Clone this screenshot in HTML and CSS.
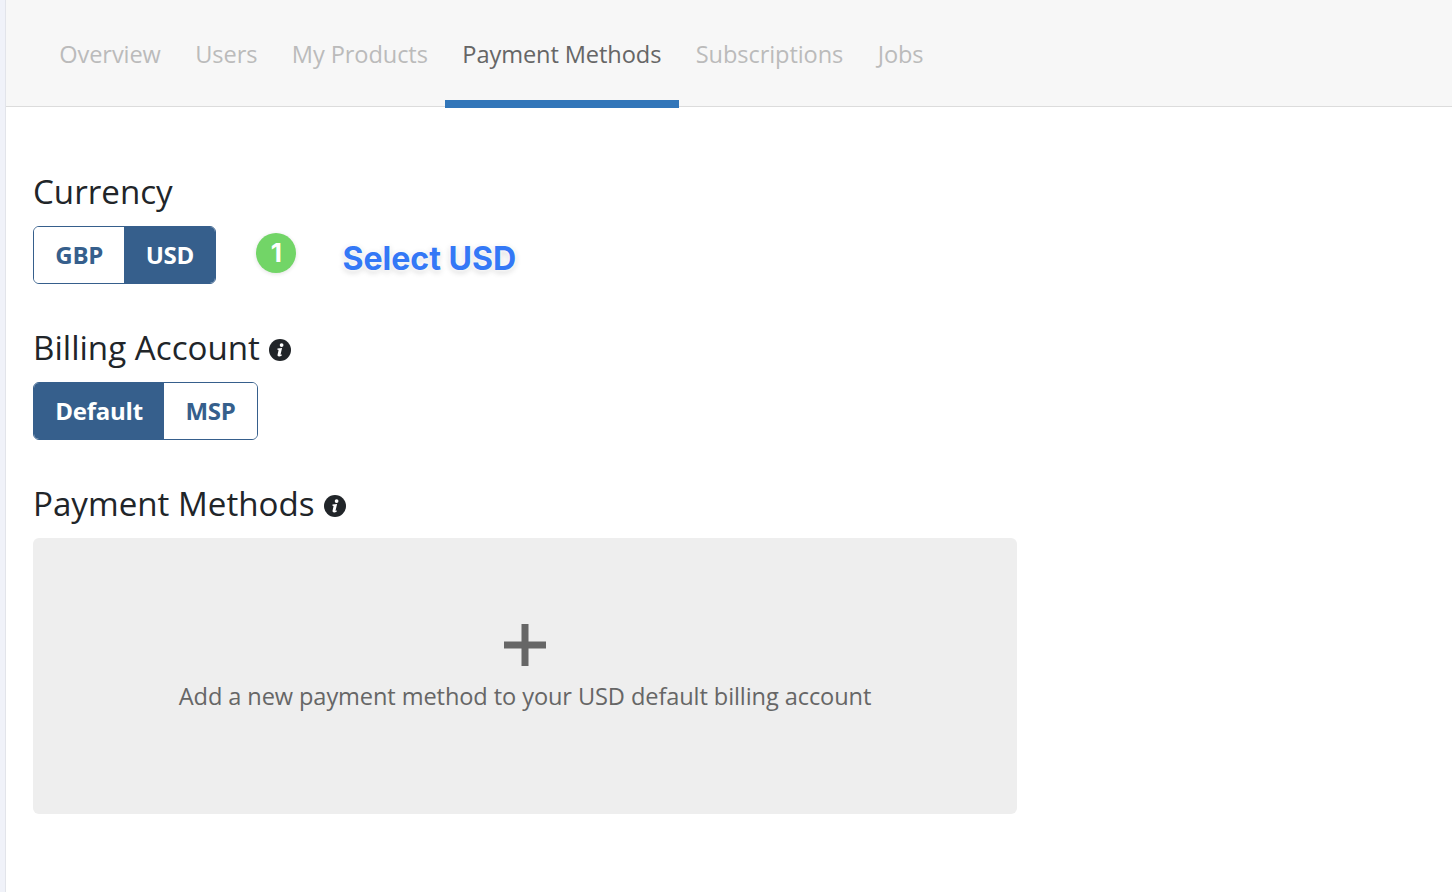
FILE: index.html
```html
<!DOCTYPE html>
<html lang="en">
<head>
    <meta charset="UTF-8">
    <title>Payment Methods</title>
    <link rel="stylesheet" href="styles.css">
</head>
<body>
    <div class="sidebar-edge"></div>
    <div class="main">
        <!-- Tabs -->
        <nav class="tabs">
            <a class="tab">Overview</a>
            <a class="tab">Users</a>
            <a class="tab">My Products</a>
            <a class="tab active">Payment Methods</a>
            <a class="tab">Subscriptions</a>
            <a class="tab">Jobs</a>
        </nav>

        <div class="content">
            <section class="section currency">
                <h2>Currency</h2>
                <div class="toggle-row">
                    <div class="toggle">
                        <button class="toggle-btn">GBP</button>
                        <button class="toggle-btn selected">USD</button>
                    </div>
                    <span class="step-badge">1</span>
                    <span class="step-label">Select USD</span>
                </div>
            </section>

            <section class="section billing">
                <h2>Billing Account
                    <svg class="info-icon" viewBox="0 0 22 22"><circle cx="11" cy="11" r="11" fill="#212529"/><path fill="#fff" d="M12.6 4.2a1.9 1.9 0 1 1 0 3.8 1.9 1.9 0 0 1 0-3.8zM8.5 9.6l4.6-.5-1.5 6.2c-.1.5.1.6.4.5l1-.4-.2 1c-1 .7-1.8 1-2.7 1-1.2 0-1.8-.8-1.5-2l.9-3.9c.1-.5 0-.7-.7-.8l-.5-.1z"/></svg>
                </h2>
                <div class="toggle">
                    <button class="toggle-btn selected">Default</button>
                    <button class="toggle-btn">MSP</button>
                </div>
            </section>

            <section class="section methods">
                <h2>Payment Methods
                    <svg class="info-icon" viewBox="0 0 22 22"><circle cx="11" cy="11" r="11" fill="#212529"/><path fill="#fff" d="M12.6 4.2a1.9 1.9 0 1 1 0 3.8 1.9 1.9 0 0 1 0-3.8zM8.5 9.6l4.6-.5-1.5 6.2c-.1.5.1.6.4.5l1-.4-.2 1c-1 .7-1.8 1-2.7 1-1.2 0-1.8-.8-1.5-2l.9-3.9c.1-.5 0-.7-.7-.8l-.5-.1z"/></svg>
                </h2>
                <div class="add-card">
                    <svg class="plus-icon" viewBox="0 0 44 44"><path fill="#666" d="M18.500 1h7v17.500H43v7H25.500V43h-7V25.500H1v-7h17.500z"/></svg>
                    <p>Add a new payment method to your USD default billing account</p>
                </div>
            </section>
        </div>
    </div>
</body>
</html>
```

FILE: styles.css
```css
/* General page styling */
* {
    box-sizing: border-box;
}

body {
    font-family: 'Open Sans', 'Noto Sans', sans-serif;
    margin: 0;
    height: 892px;
    overflow: hidden;
    display: flex;
    background-color: white;
    color: #212529;
}

.sidebar-edge {
    width: 6px;
    flex-shrink: 0;
    background-color: #f0f2f9;
    border-right: 1px solid #e2e4ea;
}

.main {
    flex: 1;
}

/* Tabs */
.tabs {
    display: flex;
    height: 107px;
    padding-left: 36px;
    background-color: #f7f7f7;
    border-bottom: 1px solid #dcdcdc;
}

.tab {
    height: 108px;
    padding: 8px 17.25px 0;
    display: flex;
    align-items: center;
    font-size: 23.6px;
    letter-spacing: -0.1px;
    color: #bbbbbb;
    border-bottom: 8px solid transparent;
}

.tab.active {
    color: #666666;
    border-bottom-color: #3276b9;
}

/* Sections */
.content {
    padding: 63px 27px 0;
}

.section h2 {
    margin: 0;
    font-size: 33.15px;
    font-weight: 400;
    line-height: 44px;
    display: flex;
    align-items: center;
    gap: 9px;
}

.info-icon {
    width: 22px;
    height: 22px;
    margin-top: 4px;
}

.section.billing,
.section.methods {
    margin-top: 42px;
}

.toggle-row {
    display: flex;
    align-items: flex-start;
    margin-top: 12px;
}

.billing .toggle,
.methods .add-card {
    margin-top: 12px;
}

/* Toggle buttons */
.toggle {
    display: inline-flex;
    height: 58px;
    border: 1px solid #365f8c;
    border-radius: 6px;
    overflow: hidden;
    vertical-align: top;
}

.toggle-btn {
    border: none;
    padding: 0 21.3px 2px;
    font-family: inherit;
    font-size: 24px;
    font-weight: 700;
    background-color: white;
    color: #365f8c;
    letter-spacing: -0.25px;
}

.toggle-btn.selected {
    background-color: #365f8c;
    color: white;
}

/* Annotation */
.step-badge {
    width: 40px;
    height: 40px;
    margin: 7px 0 0 40px;
    border-radius: 50%;
    background-color: #72d567;
    color: white;
    font-family: 'Inter', sans-serif;
    font-size: 26px;
    font-weight: 700;
    padding-bottom: 2px;
    display: flex;
    align-items: center;
    justify-content: center;
    box-shadow: 0 1px 4px rgba(0, 0, 0, 0.12);
}

.step-label {
    margin: 10px 0 0 46px;
    font-family: 'Inter', sans-serif;
    font-size: 32.1px;
    font-weight: 700;
    line-height: 46px;
    color: #3478f6;
    text-shadow: 0 0 3px white, 0 0 5px white, 0 2px 6px rgba(0, 0, 0, 0.2);
}

/* Add payment method card */
.add-card {
    width: 984px;
    height: 276px;
    background-color: #eeeeee;
    border-radius: 6px;
    display: flex;
    flex-direction: column;
    align-items: center;
    padding-top: 85px;
}

.plus-icon {
    width: 44px;
    height: 44px;
}

.add-card p {
    margin: 12px 0 0;
    font-size: 23.6px;
    line-height: 34px;
    letter-spacing: -0.1px;
    color: #666666;
}
```
